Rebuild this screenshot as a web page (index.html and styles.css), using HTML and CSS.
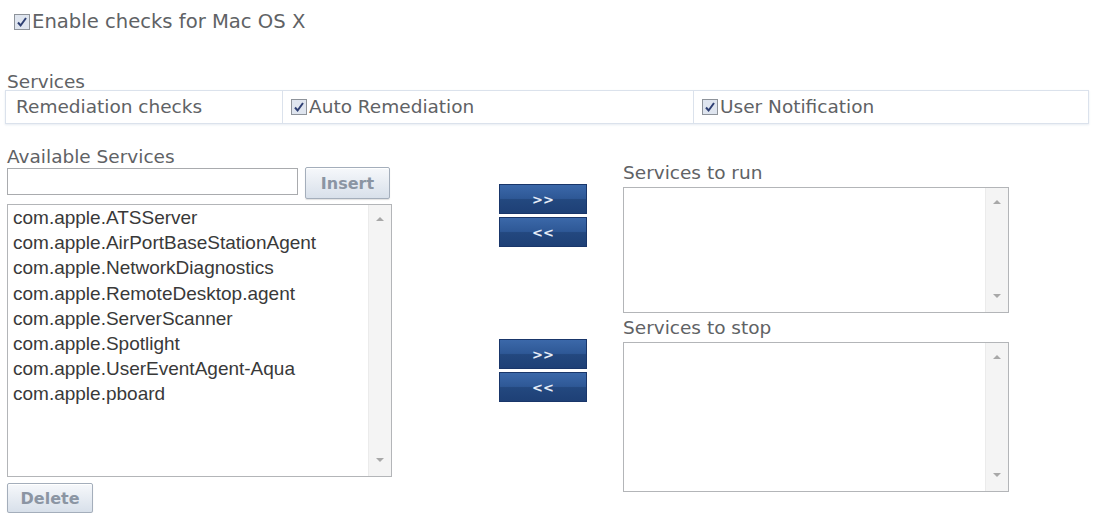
FILE: index.html
```html
<!DOCTYPE html>
<html lang="en">
<head>
  <meta charset="UTF-8" />
  <title>Mac OS X checks</title>
  <link rel="stylesheet" href="styles.css">
</head>
<body>
  <div class="page">
    <label class="enable">
      <svg class="checkbox" viewBox="0 0 16 16"><rect x="0.5" y="0.5" width="15" height="15" fill="#dfe5ef" stroke="#8e939a"/><path d="M4 8.5 L6.6 11.5 L12 4" fill="none" stroke="#2e3f73" stroke-width="2"/></svg>Enable checks for Mac OS X
    </label>

    <div class="section-title">Services</div>
    <div class="remediation">
      <div class="cell first">Remediation checks</div>
      <label class="cell">
        <svg class="checkbox" viewBox="0 0 16 16"><rect x="0.5" y="0.5" width="15" height="15" fill="#dfe5ef" stroke="#8e939a"/><path d="M4 8.5 L6.6 11.5 L12 4" fill="none" stroke="#2e3f73" stroke-width="2"/></svg>Auto Remediation
      </label>
      <label class="cell">
        <svg class="checkbox" viewBox="0 0 16 16"><rect x="0.5" y="0.5" width="15" height="15" fill="#dfe5ef" stroke="#8e939a"/><path d="M4 8.5 L6.6 11.5 L12 4" fill="none" stroke="#2e3f73" stroke-width="2"/></svg>User Notification
      </label>
    </div>

    <div class="transfer">
      <div class="available">
        <div class="field-label">Available Services</div>
        <div class="insert-row">
          <input type="text" class="service-input">
          <button class="light-btn insert">Insert</button>
        </div>
        <div class="listbox services">
          <ul class="items">
            <li>com.apple.ATSServer</li>
            <li>com.apple.AirPortBaseStationAgent</li>
            <li>com.apple.NetworkDiagnostics</li>
            <li>com.apple.RemoteDesktop.agent</li>
            <li>com.apple.ServerScanner</li>
            <li>com.apple.Spotlight</li>
            <li>com.apple.UserEventAgent-Aqua</li>
            <li>com.apple.pboard</li>
          </ul>
          <div class="scrollbar"><span class="arrow up"></span><span class="arrow down"></span></div>
        </div>
        <button class="light-btn delete">Delete</button>
      </div>

      <div class="targets">
        <div class="target-row">
          <div class="move-buttons">
            <button class="move-btn">&gt;&gt;</button>
            <button class="move-btn">&lt;&lt;</button>
          </div>
          <div class="target">
            <div class="field-label">Services to run</div>
            <div class="listbox run">
              <div class="items"></div>
              <div class="scrollbar"><span class="arrow up"></span><span class="arrow down"></span></div>
            </div>
          </div>
        </div>

        <div class="target-row second">
          <div class="move-buttons">
            <button class="move-btn">&gt;&gt;</button>
            <button class="move-btn">&lt;&lt;</button>
          </div>
          <div class="target">
            <div class="field-label">Services to stop</div>
            <div class="listbox stop">
              <div class="items"></div>
              <div class="scrollbar"><span class="arrow up"></span><span class="arrow down"></span></div>
            </div>
          </div>
        </div>
      </div>
    </div>
  </div>
</body>
</html>
```

FILE: styles.css
```css
body {
  margin: 0;
  font-family: "DejaVu Sans", Verdana, sans-serif;
  font-size: 18.5px;
  line-height: 22px;
  color: #606265;
  background: #fff;
}
.page {
  padding-top: 11px;
}
.checkbox {
  width: 16px;
  height: 16px;
  flex: none;
  margin-right: 2px;
}
.enable {
  display: flex;
  align-items: center;
  height: 22px;
  padding-left: 14px;
  font-size: 19.6px;
}
.section-title {
  margin-top: 39px;
  padding-left: 7px;
  line-height: 19px;
}
.remediation {
  margin: -1px 0 0 5px;
  width: 1084px;
  height: 34px;
  box-sizing: border-box;
  display: grid;
  grid-template-columns: 276px 411px 1fr;
  border: 1px solid #dbe2ec;
  box-shadow: 0 1px 2px rgba(160,175,200,0.25);
}
.cell {
  display: flex;
  align-items: center;
  padding-left: 8px;
  border-left: 1px solid #dbe2ec;
}
.cell.first {
  padding-left: 10px;
  border-left: none;
}
.transfer {
  display: flex;
  margin-top: 22px;
  padding-left: 7px;
}
.available {
  width: 385px;
}
.field-label {
  height: 22px;
}
.insert-row {
  display: flex;
  align-items: flex-start;
  margin-top: -1px;
  height: 32px;
}
.service-input {
  width: 291px;
  height: 27px;
  margin: 1px 7px 0 0;
  box-sizing: border-box;
  border: 1px solid #a9abae;
  padding: 0;
  background: #fff;
}
.light-btn {
  font-family: "DejaVu Sans", Verdana, sans-serif;
  font-weight: bold;
  font-size: 16px;
  color: #8b95a3;
  background: linear-gradient(#f6f8fb, #d8e0ea);
  border: 1px solid #a4aebb;
  border-radius: 2px;
  box-shadow: inset 0 1px 0 #fff, 0 1px 1px rgba(0,0,0,0.12);
  padding: 0;
}
.insert {
  width: 85px;
  height: 32px;
}
.delete {
  margin-top: 6px;
  width: 86px;
  height: 30px;
}
.listbox {
  display: flex;
  box-sizing: border-box;
  border: 1px solid #b3b5b8;
  background: #fff;
}
.listbox.services {
  margin-top: 5px;
  height: 273px;
}
.items {
  flex: 1;
  list-style: none;
  margin: 0;
  padding: 0 0 0 5px;
  font-family: "Liberation Sans", Arial, sans-serif;
  font-size: 19px;
  line-height: 25.2px;
  color: #393939;
}
.scrollbar {
  width: 22px;
  background: #f4f4f4;
  border-left: 1px solid #ebebeb;
  display: flex;
  flex-direction: column;
  justify-content: space-between;
  align-items: center;
  padding: 12px 0 14px;
}
.arrow {
  width: 0;
  height: 0;
  border-left: 4px solid transparent;
  border-right: 4px solid transparent;
}
.arrow.up {
  border-bottom: 4px solid #a8a8a8;
}
.arrow.down {
  border-top: 4px solid #a8a8a8;
}
.targets {
  margin-left: 107px;
  margin-top: 16px;
}
.target-row {
  display: flex;
}
.target-row.second {
  margin-top: 4px;
}
.move-buttons {
  width: 88px;
  margin-top: 22px;
  display: flex;
  flex-direction: column;
  gap: 3px;
}
.move-btn {
  height: 30px;
  padding: 0;
  font-family: "DejaVu Sans", Verdana, sans-serif;
  font-weight: bold;
  font-size: 13px;
  color: #e6edf8;
  border: 1px solid #19366a;
  background: linear-gradient(#3b68a9 0%, #2e5896 48%, #23487f 52%, #1e4076 100%);
}
.target {
  margin-left: 36px;
  width: 386px;
}
.target .field-label {
  margin-bottom: 3px;
}
.listbox.run {
  height: 126px;
}
.listbox.stop {
  height: 150px;
}
```
